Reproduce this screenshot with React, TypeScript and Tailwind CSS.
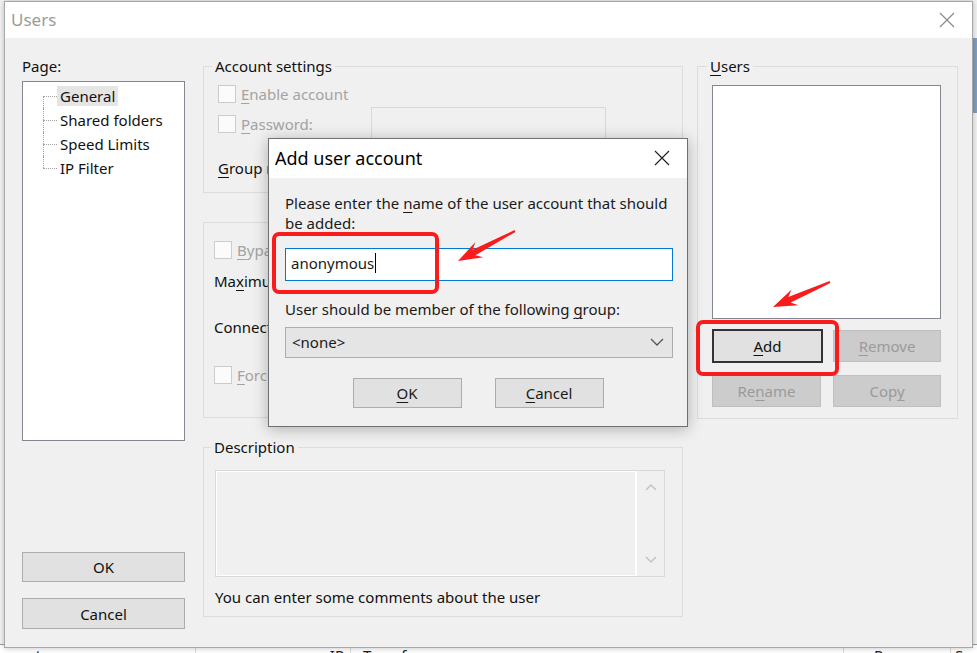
import React from "react";

const pages = ["General", "Shared folders", "Speed Limits", "IP Filter"];

function U({ children }: { children: React.ReactNode }) {
  return <span className="underline decoration-1 underline-offset-[3px]">{children}</span>;
}

function Box({ off }: { off?: boolean }) {
  return (
    <span
      className={
        off
          ? "block w-[18px] h-[18px] shrink-0 border border-[#cccccc] bg-[#fbfbfb]"
          : "block w-[18px] h-[18px] shrink-0 border border-[#333333] bg-white"
      }
    />
  );
}

function Btn({ children, className }: { children: React.ReactNode; className: string }) {
  return (
    <div className={`flex items-center justify-center border border-[#adadad] bg-[#e1e1e1] ${className}`}>
      {children}
    </div>
  );
}

function Dead({ children, className }: { children: React.ReactNode; className: string }) {
  return (
    <div className={`flex items-center justify-center border border-[#bfbfbf] bg-[#cccccc] text-[#9a9a9a] ${className}`}>
      {children}
    </div>
  );
}

function Close({ color }: { color: string }) {
  return (
    <svg width="16" height="16" viewBox="0 0 16 16">
      <path d="M1 1 L15 15 M15 1 L1 15" stroke={color} strokeWidth="1.2" fill="none" />
    </svg>
  );
}

export default function App() {
  return (
    <div className="relative w-[977px] h-[653px] overflow-hidden bg-white font-['Noto_Sans',sans-serif] text-[15px] leading-[20px] text-[#111]">
      {/* app behind the dialog */}
      <div className="flex h-full flex-col justify-end bg-[#f4f4f4]">
        <div className="flex h-[14px] items-start border-t border-[#9a9a9a] bg-white text-[#222] leading-[20px] -mb-[5px]">
          <span className="w-[195px] pl-[1px]">count</span>
          <span className="w-[155px] border-l border-[#ddd] text-right pr-[6px]">IP</span>
          <span className="w-[493px] border-l border-[#ddd] pl-[12px]">Transfer</span>
          <span className="w-[107px] border-l border-[#ddd] pl-[30px]">Progress</span>
          <span className="border-l border-[#ddd] pl-[4px]">Sp</span>
        </div>
      </div>
      <div className="absolute right-0 top-[38px] h-[75px] w-[5px] bg-[#7f9fc4]" />

      {/* Users window */}
      <div className="absolute left-[4px] top-[1px] flex h-[647px] w-[969px] flex-col border border-[#a8a8a8] bg-[#f0f0f0] shadow-[0_0_6px_rgba(0,0,0,0.25)]">
        <div className="flex h-[36px] items-center justify-between bg-white pl-[6px] pr-[17px]">
          <span className="text-[17px] text-[#9b9b9b]">Users</span>
          <Close color="#8a8a8a" />
        </div>

        <div className="flex pl-[17px] pr-[14px] pt-[18px]">
          {/* left column */}
          <div className="flex w-[163px] flex-col">
            <div className="h-[20px]">Page:</div>
            <div className="mt-[5px] h-[360px] border border-[#828790] bg-white pt-[2px]">
              {pages.map((p, i) => (
                <div key={p} className="flex h-[24px]">
                  <div className="ml-[20px] flex w-[14px] flex-col">
                    <div className={i > 0 ? "h-1/2 border-l border-dotted border-[#a0a0a0]" : "h-1/2"} />
                    <div
                      className={
                        i < pages.length - 1
                          ? "h-1/2 border-l border-t border-dotted border-[#a0a0a0]"
                          : "h-1/2 border-t border-dotted border-[#a0a0a0]"
                      }
                    />
                  </div>
                  <span className={i === 0 ? "self-center bg-[#e5e5e5] px-[3px]" : "self-center px-[3px]"}>{p}</span>
                </div>
              ))}
            </div>
            <Btn className="mt-[111px] h-[30px]">OK</Btn>
            <Btn className="mt-[16px] h-[31px]">Cancel</Btn>
          </div>

          {/* middle column */}
          <div className="ml-[18px] flex w-[480px] flex-col">
            <fieldset className="h-[137px] border border-[#dcdcdc]">
              <legend className="ml-[8px] px-[3px]">Account settings</legend>
              <div className="flex flex-col pl-[14px]">
                <div className="mt-[8px] flex h-[20px] items-center gap-[5px] text-[#a3a3a3]">
                  <Box off />
                  <span>
                    <U>E</U>nable account
                  </span>
                </div>
                <div className="mt-[3px] flex h-[33px] items-center">
                  <div className="flex w-[153px] items-center gap-[5px] text-[#a3a3a3]">
                    <Box off />
                    <span>
                      <U>P</U>assword:
                    </span>
                  </div>
                  <div className="h-full w-[235px] border border-[#d9d9d9] bg-[#f0f0f0]" />
                </div>
                <div className="mt-[18px] flex h-[20px] items-center">
                  <span className="w-[153px]">
                    <U>G</U>roup membership:
                  </span>
                  <div className="h-[28px] w-[235px] border border-[#d9d9d9] bg-[#e5e5e5]" />
                </div>
              </div>
            </fieldset>

            <fieldset className="mt-[29px] h-[196px] border border-[#dcdcdc]">
              <div className="flex flex-col pl-[10px]">
                <div className="mt-[17px] flex h-[20px] items-center gap-[5px] text-[#a3a3a3]">
                  <Box off />
                  <span>
                    <U>B</U>ypass userlimit of server
                  </span>
                </div>
                <div className="mt-[11px] h-[20px]">
                  Ma<U>x</U>imum connection count:
                </div>
                <div className="mt-[26px] h-[20px]">Connection limit per IP:</div>
                <div className="mt-[28px] flex h-[20px] items-center gap-[5px] text-[#a3a3a3]">
                  <Box off />
                  <span>
                    <U>F</U>orce SSL for user login
                  </span>
                </div>
              </div>
            </fieldset>

            <fieldset className="mt-[19px] h-[180px] border border-[#dcdcdc]">
              <legend className="ml-[7px] px-[3px]">Description</legend>
              <div className="flex flex-col pl-[11px]">
                <div className="mt-[13px] flex h-[107px] w-[450px] border border-[#d9d9d9] bg-[#f0f0f0]">
                  <div className="flex-1 border border-white" />
                  <div className="flex w-[28px] flex-col items-center justify-between border-l border-white py-[12px]">
                    <svg width="12" height="8" viewBox="0 0 12 8">
                      <path d="M1 7 L6 2 L11 7" stroke="#c4c4c4" strokeWidth="1.5" fill="none" />
                    </svg>
                    <svg width="12" height="8" viewBox="0 0 12 8">
                      <path d="M1 1 L6 6 L11 1" stroke="#c4c4c4" strokeWidth="1.5" fill="none" />
                    </svg>
                  </div>
                </div>
                <div className="mt-[10px] h-[20px]">You can enter some comments about the user</div>
              </div>
            </fieldset>
          </div>

          {/* right column */}
          <div className="ml-[14px] flex w-[261px] flex-col">
            <fieldset className="h-[363px] border border-[#dcdcdc]">
              <legend className="ml-[9px] px-[3px]">
                <U>U</U>sers
              </legend>
              <div className="flex flex-col pl-[14px]">
                <div className="mt-[9px] h-[234px] w-[229px] border border-[#828790] bg-white" />
                <div className="mt-[10px] flex items-center">
                  <div className="flex h-[34px] w-[111px] items-center justify-center border-2 border-[#333333] bg-[#e1e1e1]">
                    <span>
                      <U>A</U>dd
                    </span>
                  </div>
                  <Dead className="ml-[10px] h-[32px] w-[108px]">
                    <span>
                      <U>R</U>emove
                    </span>
                  </Dead>
                </div>
                <div className="mt-[12px] flex items-center">
                  <Dead className="h-[32px] w-[109px]">
                    <span>
                      Re<U>n</U>ame
                    </span>
                  </Dead>
                  <Dead className="ml-[12px] h-[32px] w-[108px]">
                    <span>
                      Cop<U>y</U>
                    </span>
                  </Dead>
                </div>
              </div>
            </fieldset>
          </div>
        </div>
      </div>

      {/* Add user account dialog */}
      <div className="absolute left-[268px] top-[138px] flex h-[289px] w-[420px] flex-col border border-[#707070] bg-[#f0f0f0] shadow-[0_2px_14px_rgba(0,0,0,0.28)]">
        <div className="flex h-[39px] items-center justify-between bg-white pb-[2px] pl-[6px] pr-[17px]">
          <span className="text-[18px] text-black">Add user account</span>
          <Close color="#222" />
        </div>
        <div className="flex flex-col px-[16px] pt-[15px] text-[#1a1a1a]">
          <div>
            Please enter the <U>n</U>ame of the user account that should be added:
          </div>
          <div className="mt-[15px] flex h-[33px] w-[388px] items-center border border-[#0078d7] bg-white pb-[4px] pl-[5px]">
            <span>anonymous</span>
            <span className="ml-[1px] h-[20px] w-[1px] bg-black" />
          </div>
          <div className="mt-[18px] h-[20px]">
            User should be member of the following <U>g</U>roup:
          </div>
          <div className="mt-[8px] flex h-[31px] w-[388px] items-center justify-between border border-[#adadad] bg-[#e5e5e5] pb-[2px] pl-[6px] pr-[8px]">
            <span>&lt;none&gt;</span>
            <svg width="14" height="8" viewBox="0 0 14 8">
              <path d="M1 1 L7 7 L13 1" stroke="#555" strokeWidth="1.3" fill="none" />
            </svg>
          </div>
          <div className="mt-[20px] flex justify-center gap-[33px]">
            <Btn className="h-[30px] w-[109px]">
              <span>
                <U>O</U>K
              </span>
            </Btn>
            <Btn className="h-[30px] w-[109px]">
              <span>
                <U>C</U>ancel
              </span>
            </Btn>
          </div>
        </div>
      </div>

      {/* red annotations */}
      <svg className="pointer-events-none absolute left-0 top-0" width="977" height="653" viewBox="0 0 977 653">
        <rect x="274" y="234" width="163" height="58" rx="5" fill="none" stroke="#f81c1c" strokeWidth="4" />
        <rect x="698" y="322" width="139" height="52" rx="5" fill="none" stroke="#f81c1c" strokeWidth="4" />
        <polygon
          points="458,261 483.4,257.3 475.4,255.2 515.5,231.9 514.5,230.1 472.6,249.8 475.4,242.1"
          fill="#f81c1c"
        />
        <polygon
          points="773,307 798.4,305.2 790.7,302.5 830.4,282.9 829.6,281.1 788.3,297 791.6,289.6"
          fill="#f81c1c"
        />
      </svg>
    </div>
  );
}
